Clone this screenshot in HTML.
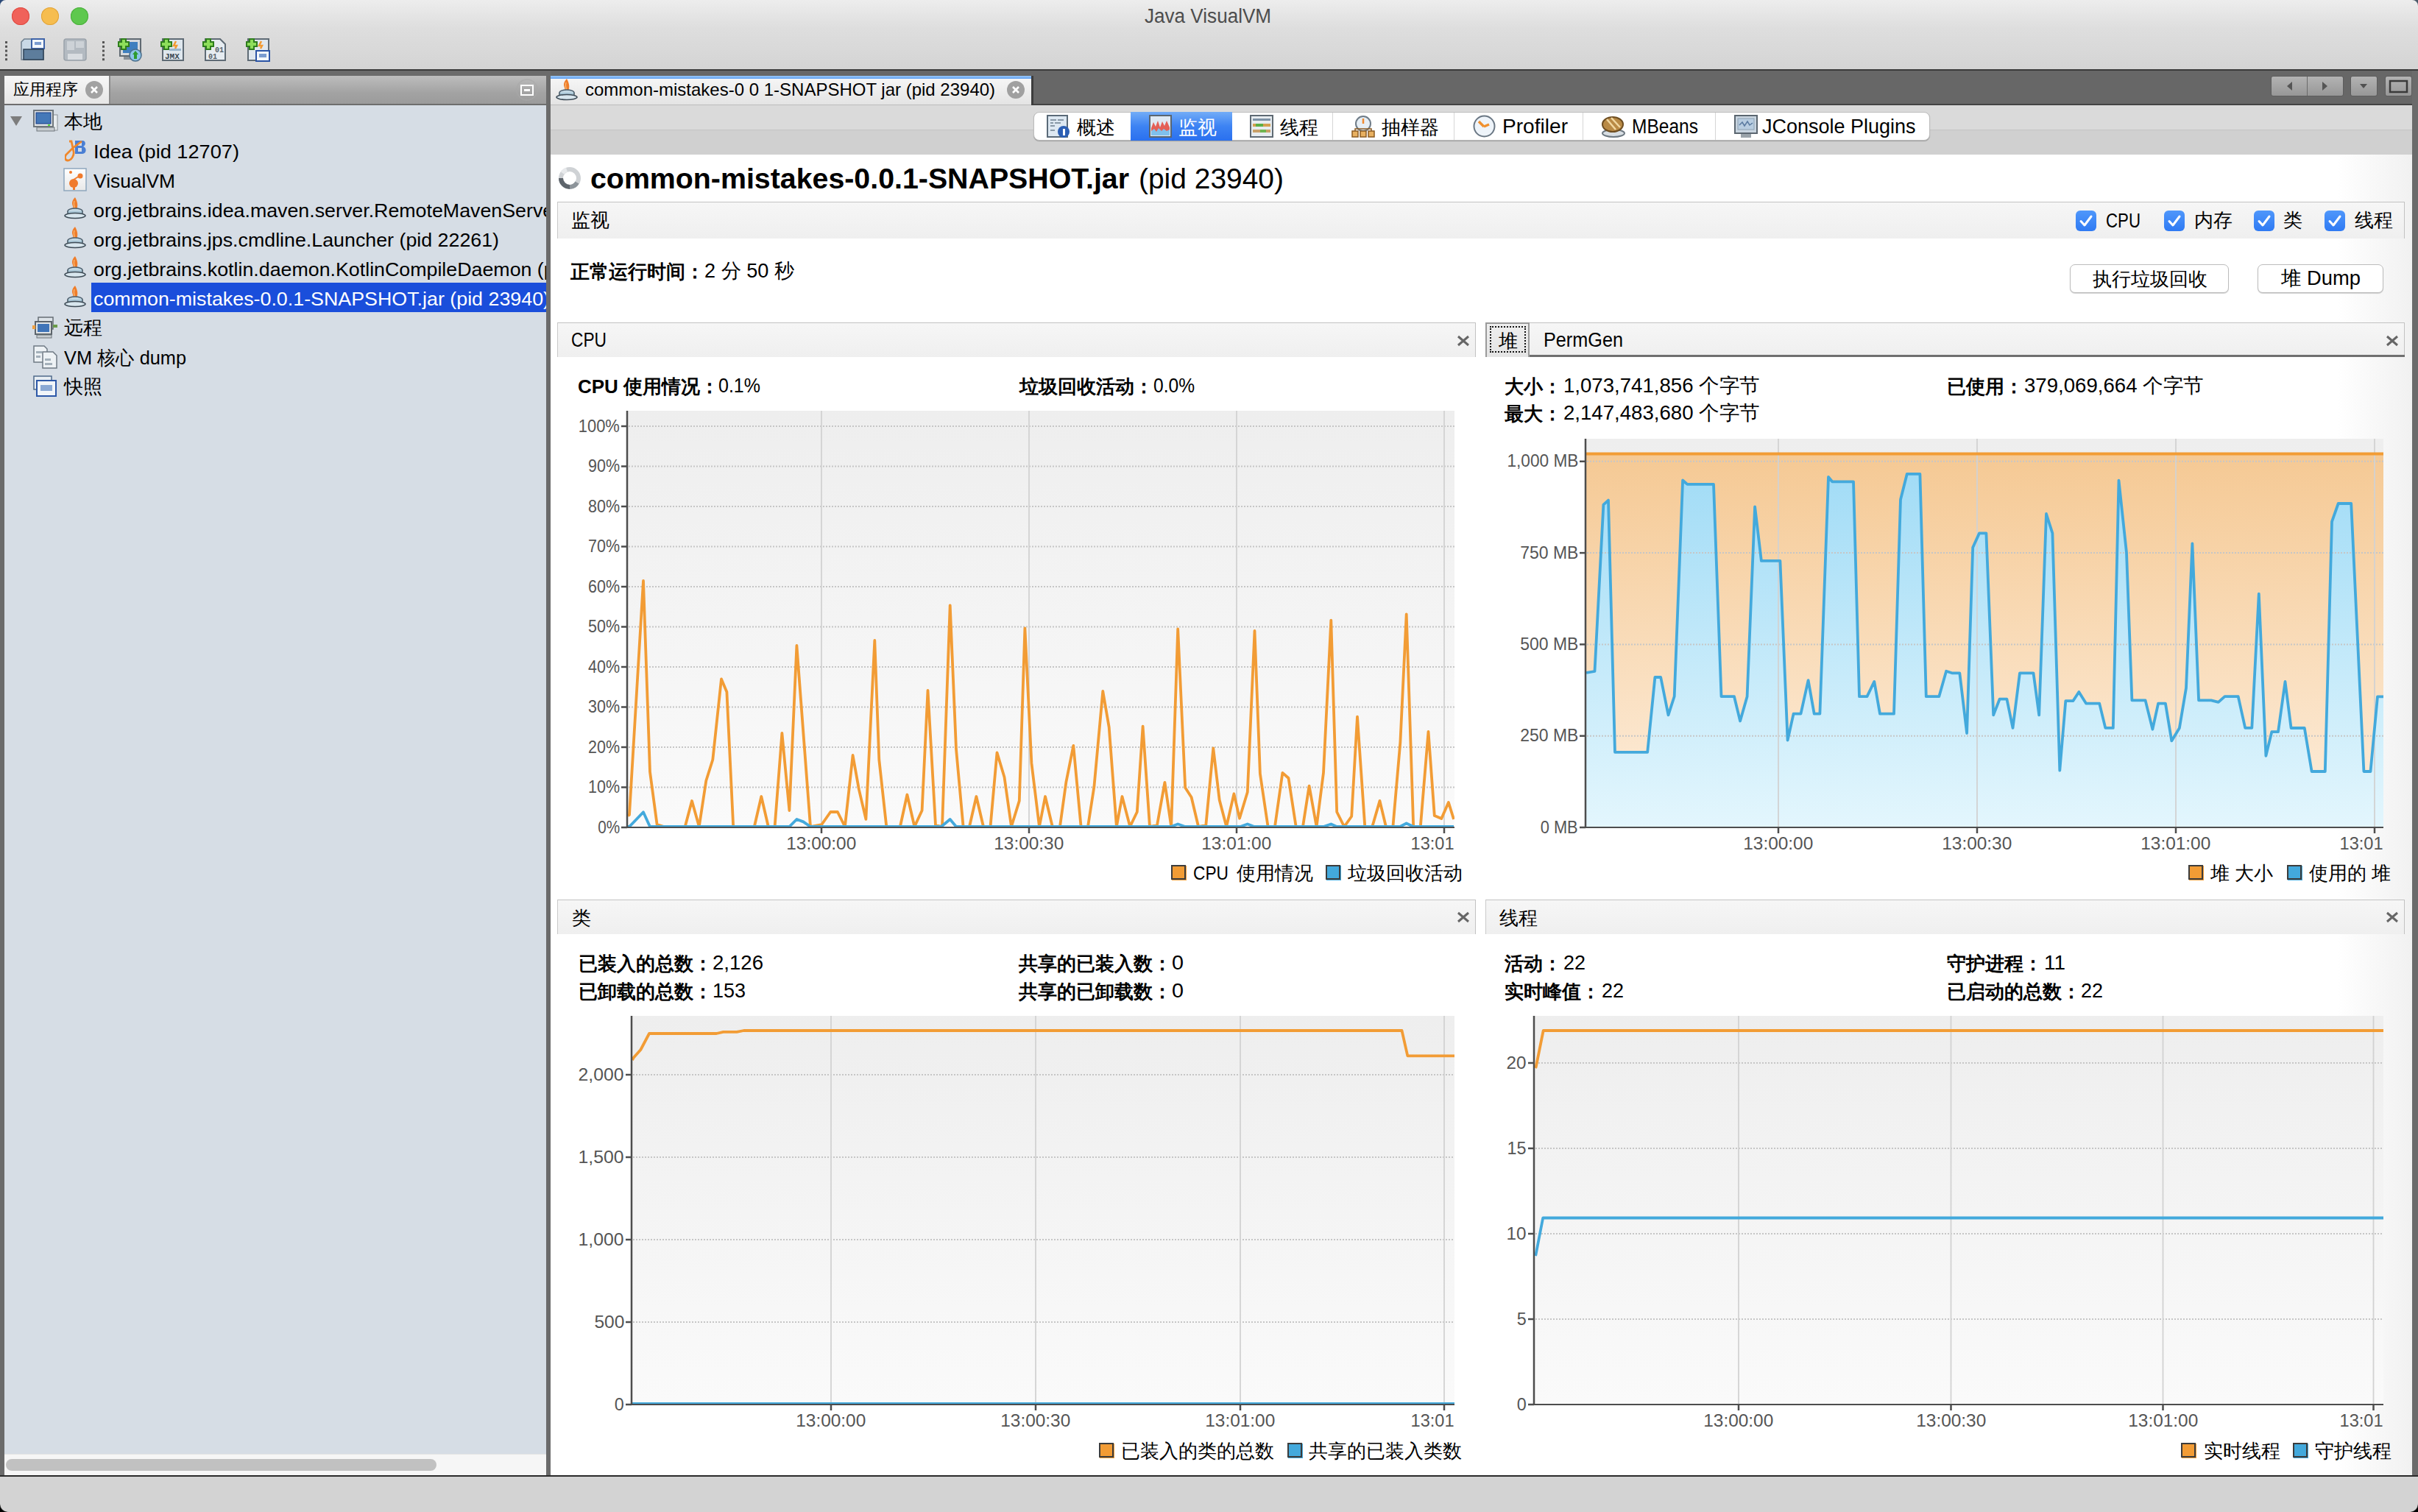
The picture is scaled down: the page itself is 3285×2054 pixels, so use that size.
<!DOCTYPE html>
<html><head><meta charset="utf-8"><title>Java VisualVM</title>
<style>
html,body{margin:0;padding:0;}
body{width:3285px;height:2054px;position:relative;overflow:hidden;background:#6b6b6b;font-family:"Liberation Sans", sans-serif;}
svg{position:absolute;left:0;top:0;}
</style></head><body>
<div style="position:absolute;left:0px;top:0px;width:3285px;height:94px;background:linear-gradient(#ededed,#dedede 40%,#d4d4d4);"></div><div style="position:absolute;left:0px;top:94px;width:3285px;height:2px;background:#3a3a3a;"></div><div style="position:absolute;left:16px;top:10px;width:24px;height:24px;border-radius:50%;background:#f0625a;box-shadow:inset 0 0 0 1px #de4a42;"></div><div style="position:absolute;left:56px;top:10px;width:24px;height:24px;border-radius:50%;background:#f6bd4f;box-shadow:inset 0 0 0 1px #e0a33a;"></div><div style="position:absolute;left:96px;top:10px;width:24px;height:24px;border-radius:50%;background:#5ec84e;box-shadow:inset 0 0 0 1px #4aae3c;"></div><div style="position:absolute;left:1141.0px;width:1000px;text-align:center;top:9.1px;font-size:27px;line-height:27px;font-weight:normal;color:#4d4d4d;white-space:nowrap;"><span id="t0" style="display:inline-block;transform:scaleX(0.9658);transform-origin:center center;">Java VisualVM</span></div><div style="position:absolute;left:0px;top:2004px;width:3285px;height:2px;background:#2a2a2a;"></div><div style="position:absolute;left:0px;top:2006px;width:3285px;height:48px;background:#d3d3d3;border-radius:0 0 12px 12px;"></div><svg style="left:7px;top:56px;" width="3" height="27" viewBox="0 0 3 27"><rect x="0" y="0.0" width="3" height="3" fill="#555"/><rect x="0" y="5.8" width="3" height="3" fill="#555"/><rect x="0" y="11.6" width="3" height="3" fill="#555"/><rect x="0" y="17.4" width="3" height="3" fill="#555"/><rect x="0" y="23.2" width="3" height="3" fill="#555"/></svg><svg style="left:139px;top:56px;" width="3" height="27" viewBox="0 0 3 27"><rect x="0" y="0.0" width="3" height="3" fill="#555"/><rect x="0" y="5.8" width="3" height="3" fill="#555"/><rect x="0" y="11.6" width="3" height="3" fill="#555"/><rect x="0" y="17.4" width="3" height="3" fill="#555"/><rect x="0" y="23.2" width="3" height="3" fill="#555"/></svg><svg style="left:28px;top:52px;" width="33" height="31" viewBox="0 0 33 31"><path d="M1 5 l4 -4 h10 l4 4 v6 h12 v18 h-30 z" fill="#c9d9e6" stroke="#6d7f8e" stroke-width="1.5"/><rect x="15" y="1" width="17" height="13" fill="#f4f8fc" stroke="#3e63a8" stroke-width="2"/><rect x="19" y="5" width="9" height="4" fill="#7a9cd0"/><path d="M4 15 h27 v14 h-27 z" fill="#5d7d9c" stroke="#2e4156" stroke-width="1.5"/></svg><svg style="left:86px;top:52px;" width="32" height="31" viewBox="0 0 32 31"><rect x="1" y="1" width="30" height="29" rx="3" fill="#b3bac1" stroke="#9aa2aa" stroke-width="1.5"/><rect x="5" y="4" width="10" height="12" fill="#cdd2d7"/><rect x="17" y="4" width="11" height="9" fill="#cdd2d7"/><rect x="6" y="21" width="20" height="8" fill="#d9dde1"/></svg><svg style="left:160px;top:52px;" width="33" height="32" viewBox="0 0 33 32"><rect x="3" y="1" width="28" height="23" fill="#d5d9dd" stroke="#606a72" stroke-width="2"/><rect x="7" y="5" width="20" height="15" fill="#3f7fbf"/><rect x="8" y="25" width="18" height="4" fill="#8a9299"/><circle cx="24" cy="23" r="8" fill="#8cc4e8" stroke="#4b6e8c" stroke-width="1.5"/><path d="M20 22 l4 -5 l4 5 h-2 v6 h-4 v-6 z" fill="#2e9b2e"/><path d="M4 0 h8 v4 h4 v8 h-4 v4 h-8 v-4 h-4 v-8 h4 z" fill="#2f7d1e"/><path d="M6 2 h4 v4 h4 v4 h-4 v4 h-4 v-4 h-4 v-4 h4 z" fill="#8ede5a"/></svg><svg style="left:218px;top:52px;" width="33" height="32" viewBox="0 0 33 32"><rect x="3" y="1" width="28" height="29" fill="#dfe7ee" stroke="#5f6b75" stroke-width="2"/><path d="M21 4 l-3 6 h4 l-2 4" stroke="#f29a32" stroke-width="2.5" fill="none"/><rect x="12" y="14" width="16" height="3" fill="#9bb6cc"/><text x="6" y="28" font-family="Liberation Mono" font-weight="bold" font-size="11" fill="#3a4752">JMX</text><path d="M4 0 h8 v4 h4 v8 h-4 v4 h-8 v-4 h-4 v-8 h4 z" fill="#2f7d1e"/><path d="M6 2 h4 v4 h4 v4 h-4 v4 h-4 v-4 h-4 v-4 h4 z" fill="#8ede5a"/></svg><svg style="left:275px;top:52px;" width="32" height="32" viewBox="0 0 32 32"><path d="M4 1 h20 l7 7 v22 h-27 z" fill="#e6ecf1" stroke="#5f6b75" stroke-width="2"/><text x="8" y="28" font-family="Liberation Mono" font-weight="bold" font-size="10" fill="#56626c">01</text><text x="17" y="19" font-family="Liberation Mono" font-weight="bold" font-size="10" fill="#56626c">01</text><path d="M4 0 h8 v4 h4 v8 h-4 v4 h-8 v-4 h-4 v-8 h4 z" fill="#2f7d1e"/><path d="M6 2 h4 v4 h4 v4 h-4 v4 h-4 v-4 h-4 v-4 h4 z" fill="#8ede5a"/></svg><svg style="left:334px;top:52px;" width="33" height="32" viewBox="0 0 33 32"><rect x="3" y="1" width="28" height="29" fill="#dfe7ee" stroke="#5f6b75" stroke-width="2"/><path d="M21 4 l-3 6 h4 l-2 4" stroke="#f29a32" stroke-width="2.5" fill="none"/><rect x="14" y="17" width="18" height="14" fill="#f3f7fb" stroke="#2c55a6" stroke-width="2"/><rect x="18" y="21" width="10" height="5" fill="#7a9cd0"/><path d="M4 0 h8 v4 h4 v8 h-4 v4 h-8 v-4 h-4 v-8 h4 z" fill="#2f7d1e"/><path d="M6 2 h4 v4 h4 v4 h-4 v4 h-4 v-4 h-4 v-4 h4 z" fill="#8ede5a"/></svg><div style="position:absolute;left:6px;top:103px;width:736px;height:38px;background:linear-gradient(#bdbdbd,#a3a3a3 60%,#9b9b9b);"></div><div style="position:absolute;left:6px;top:103px;width:144px;height:38px;background:linear-gradient(#f7f7f7,#e6e6e6);border-right:2px solid #8c8c8c;box-sizing:border-box;"></div><span id="t1" style="position:absolute;left:18.0px;top:111.4px;font-size:22px;line-height:22px;font-weight:normal;color:#000;white-space:nowrap;">应用程序</span><div style="position:absolute;left:116px;top:110px;width:24px;height:24px;border-radius:50%;background:#a2a2a2;"></div><svg style="left:116px;top:110px;" width="24" height="24" viewBox="0 0 24 24"><path d="M8 8 L16 16 M16 8 L8 16" stroke="#fff" stroke-width="2.6"/></svg><svg style="left:700px;top:106px;" width="32" height="32" viewBox="0 0 32 32"><circle cx="16" cy="16" r="14" fill="none" stroke="#a8a8a8" stroke-width="1.5" opacity="0.6"/><rect x="8" y="10" width="16" height="13" fill="none" stroke="#fff" stroke-width="2"/><rect x="12" y="15" width="8" height="3" fill="#fff"/></svg><div style="position:absolute;left:6px;top:141px;width:736px;height:2px;background:#6e6e6e;"></div><div style="position:absolute;left:6px;top:143px;width:736px;height:1832px;background:#d6dde5;"></div><div style="position:absolute;left:6px;top:1975px;width:736px;height:29px;background:#f6f6f6;border-top:1px solid #e4e4e4;box-sizing:border-box;"></div><div style="position:absolute;left:8px;top:1982px;width:585px;height:16px;background:#c1c1c1;border-radius:8px;"></div><svg style="left:13px;top:157px;" width="18" height="15" viewBox="0 0 18 15"><path d="M1 1 H17 L9 14 Z" fill="#7d7d7d"/></svg><svg style="left:45px;top:149px;" width="34" height="31" viewBox="0 0 34 31"><rect x="27" y="7" width="6" height="21" fill="#e9edf0" stroke="#8a9096" stroke-width="1"/><rect x="1" y="1" width="26" height="22" fill="#e1e4e6" stroke="#6f767c" stroke-width="2"/><rect x="4" y="4" width="20" height="15" fill="#4478b8" stroke="#163a85" stroke-width="1"/><rect x="20" y="20" width="3" height="2" fill="#5bdc3a"/><rect x="5" y="24" width="24" height="5" fill="#c7ccd0" stroke="#6f767c" stroke-width="1"/></svg><span id="t2" style="position:absolute;left:87.0px;top:152.0px;font-size:26px;line-height:26px;font-weight:normal;color:#000;white-space:nowrap;">本地</span><svg style="left:88px;top:190px;" width="30" height="30" viewBox="0 0 30 30"><path d="M14 1 h10 c5 0 5 7 1 8 c5 1 5 10 -1 10 h-10 z M18 4 v4 h5 v-4 z M18 11 v5 h5 v-5 z" fill="#4a7fd4" fill-rule="evenodd"/><path d="M6 2 l3 0 l3 14 c1 5 -3 12 -8 12 c-4 0 -5 -6 -1 -9 l8 -8 l12 -9" stroke="#f0872a" stroke-width="2.8" fill="none"/></svg><span id="t3" style="position:absolute;left:127.0px;top:193.0px;font-size:26px;line-height:26px;font-weight:normal;color:#000;white-space:nowrap;transform:scaleX(1.0455);transform-origin:left center;">Idea (pid 12707)</span><svg style="left:86px;top:228px;" width="32" height="32" viewBox="0 0 32 32"><rect x="1" y="1" width="30" height="30" fill="url(#vvg)" stroke="#8fa7bd" stroke-width="1.5"/><defs><linearGradient id="vvg" x1="0" y1="0" x2="0" y2="1"><stop offset="0" stop-color="#fff"/><stop offset="1" stop-color="#e8e8e8"/></linearGradient></defs><circle cx="14" cy="21" r="6" fill="#f07a2c"/><circle cx="23" cy="11" r="3.5" fill="#f07a2c"/><circle cx="10" cy="6" r="2" fill="#f07a2c"/><path d="M14 16 L22 11" stroke="#f07a2c" stroke-width="2"/><rect x="13" y="26" width="3" height="4" fill="#f07a2c"/></svg><span id="t4" style="position:absolute;left:127.0px;top:233.0px;font-size:26px;line-height:26px;font-weight:normal;color:#000;white-space:nowrap;transform:scaleX(1.0150);transform-origin:left center;">VisualVM</span><svg style="left:87px;top:267px;" width="30" height="31" viewBox="0 0 30 31"><path d="M15 1 C11 5 10 9 12 13 L13 18 L17 18 C19 13 19 8 15 1 Z" fill="#ef7d2a"/><path d="M14 6 C13 9 13 12 15 17" stroke="#f7b36c" stroke-width="1.5" fill="none"/><ellipse cx="15" cy="20" rx="10" ry="4" fill="#c2d8e4" stroke="#4b5d6b" stroke-width="1.5"/><path d="M5 20 v3 c0 3 20 3 20 0 v-3" fill="#a9c6d6" stroke="#4b5d6b" stroke-width="1.5"/><ellipse cx="15" cy="26" rx="14" ry="3.5" fill="#d8e6ee" stroke="#3d4a55" stroke-width="1.5"/></svg><span id="t5" style="position:absolute;left:127.0px;top:273.0px;font-size:26px;line-height:26px;font-weight:normal;color:#000;white-space:nowrap;transform:scaleX(1.0300);transform-origin:left center;">org.jetbrains.idea.maven.server.RemoteMavenServer3</span><svg style="left:87px;top:307px;" width="30" height="31" viewBox="0 0 30 31"><path d="M15 1 C11 5 10 9 12 13 L13 18 L17 18 C19 13 19 8 15 1 Z" fill="#ef7d2a"/><path d="M14 6 C13 9 13 12 15 17" stroke="#f7b36c" stroke-width="1.5" fill="none"/><ellipse cx="15" cy="20" rx="10" ry="4" fill="#c2d8e4" stroke="#4b5d6b" stroke-width="1.5"/><path d="M5 20 v3 c0 3 20 3 20 0 v-3" fill="#a9c6d6" stroke="#4b5d6b" stroke-width="1.5"/><ellipse cx="15" cy="26" rx="14" ry="3.5" fill="#d8e6ee" stroke="#3d4a55" stroke-width="1.5"/></svg><span id="t6" style="position:absolute;left:127.0px;top:313.0px;font-size:26px;line-height:26px;font-weight:normal;color:#000;white-space:nowrap;transform:scaleX(1.0304);transform-origin:left center;">org.jetbrains.jps.cmdline.Launcher (pid 22261)</span><svg style="left:87px;top:347px;" width="30" height="31" viewBox="0 0 30 31"><path d="M15 1 C11 5 10 9 12 13 L13 18 L17 18 C19 13 19 8 15 1 Z" fill="#ef7d2a"/><path d="M14 6 C13 9 13 12 15 17" stroke="#f7b36c" stroke-width="1.5" fill="none"/><ellipse cx="15" cy="20" rx="10" ry="4" fill="#c2d8e4" stroke="#4b5d6b" stroke-width="1.5"/><path d="M5 20 v3 c0 3 20 3 20 0 v-3" fill="#a9c6d6" stroke="#4b5d6b" stroke-width="1.5"/><ellipse cx="15" cy="26" rx="14" ry="3.5" fill="#d8e6ee" stroke="#3d4a55" stroke-width="1.5"/></svg><span id="t7" style="position:absolute;left:127.0px;top:353.0px;font-size:26px;line-height:26px;font-weight:normal;color:#000;white-space:nowrap;transform:scaleX(1.0300);transform-origin:left center;">org.jetbrains.kotlin.daemon.KotlinCompileDaemon (pid</span><svg style="left:87px;top:387px;" width="30" height="31" viewBox="0 0 30 31"><path d="M15 1 C11 5 10 9 12 13 L13 18 L17 18 C19 13 19 8 15 1 Z" fill="#ef7d2a"/><path d="M14 6 C13 9 13 12 15 17" stroke="#f7b36c" stroke-width="1.5" fill="none"/><ellipse cx="15" cy="20" rx="10" ry="4" fill="#c2d8e4" stroke="#4b5d6b" stroke-width="1.5"/><path d="M5 20 v3 c0 3 20 3 20 0 v-3" fill="#a9c6d6" stroke="#4b5d6b" stroke-width="1.5"/><ellipse cx="15" cy="26" rx="14" ry="3.5" fill="#d8e6ee" stroke="#3d4a55" stroke-width="1.5"/></svg><div style="position:absolute;left:124px;top:384px;width:618px;height:40px;background:#1a4edb;"></div><span id="t8" style="position:absolute;left:127.0px;top:393.0px;font-size:26px;line-height:26px;font-weight:normal;color:#fff;white-space:nowrap;transform:scaleX(1.0314);transform-origin:left center;">common-mistakes-0.0.1-SNAPSHOT.jar (pid 23940)</span><svg style="left:44px;top:429px;" width="36" height="32" viewBox="0 0 36 32"><rect x="8" y="2" width="20" height="16" fill="#dde3e8" stroke="#656d74" stroke-width="1.5"/><rect x="4" y="8" width="22" height="17" fill="#e1e4e6" stroke="#5c646b" stroke-width="2"/><rect x="7" y="11" width="16" height="11" fill="#3f74b8"/><rect x="0" y="13" width="4" height="5" fill="#f0a040"/><rect x="28" y="12" width="6" height="4" fill="#6a9a4a"/><rect x="6" y="26" width="20" height="4" fill="#c7ccd0" stroke="#6f767c" stroke-width="1"/></svg><span id="t9" style="position:absolute;left:87.0px;top:432.0px;font-size:26px;line-height:26px;font-weight:normal;color:#000;white-space:nowrap;">远程</span><svg style="left:44px;top:469px;" width="36" height="32" viewBox="0 0 36 32"><path d="M2 1 h14 l4 4 v18 h-18 z" fill="#eef2f5" stroke="#6f7a84" stroke-width="1.5"/><path d="M14 9 h14 l5 5 v17 h-19 z" fill="#eef2f5" stroke="#6f7a84" stroke-width="1.5"/><rect x="5" y="8" width="8" height="3" fill="#a4b0ba"/><rect x="5" y="14" width="6" height="3" fill="#a4b0ba"/><rect x="17" y="18" width="8" height="3" fill="#a4b0ba"/><rect x="17" y="24" width="10" height="3" fill="#a4b0ba"/></svg><span id="t10" style="position:absolute;left:87.0px;top:473.0px;font-size:26px;line-height:26px;font-weight:normal;color:#000;white-space:nowrap;transform:scaleX(0.9736);transform-origin:left center;">VM 核心 dump</span><svg style="left:44px;top:509px;" width="36" height="32" viewBox="0 0 36 32"><rect x="2" y="2" width="24" height="18" fill="#e8eef3" stroke="#4f6a8a" stroke-width="1.5"/><rect x="6" y="8" width="26" height="21" fill="#f1f5f9" stroke="#2d58a8" stroke-width="2"/><rect x="11" y="14" width="16" height="8" fill="#8aa8d4"/></svg><span id="t11" style="position:absolute;left:87.0px;top:512.0px;font-size:26px;line-height:26px;font-weight:normal;color:#000;white-space:nowrap;">快照</span><div style="position:absolute;left:748px;top:96px;width:2529px;height:47px;background:#676767;"></div><div style="position:absolute;left:1404px;top:141px;width:1873px;height:2px;background:#444;"></div><div style="position:absolute;left:748px;top:103px;width:653px;height:4px;background:linear-gradient(#9ccaf9,#5f9fef);"></div><div style="position:absolute;left:748px;top:107px;width:653px;height:36px;background:linear-gradient(#f5f5f5,#e4e4e4);border-bottom:1px solid #bdbdbd;box-sizing:border-box;"></div><div style="position:absolute;left:1401px;top:103px;width:3px;height:40px;background:#3d3d3d;"></div><svg style="left:755px;top:106px;" width="30" height="31" viewBox="0 0 30 31"><path d="M15 1 C11 5 10 9 12 13 L13 18 L17 18 C19 13 19 8 15 1 Z" fill="#ef7d2a"/><path d="M14 6 C13 9 13 12 15 17" stroke="#f7b36c" stroke-width="1.5" fill="none"/><ellipse cx="15" cy="20" rx="10" ry="4" fill="#c2d8e4" stroke="#4b5d6b" stroke-width="1.5"/><path d="M5 20 v3 c0 3 20 3 20 0 v-3" fill="#a9c6d6" stroke="#4b5d6b" stroke-width="1.5"/><ellipse cx="15" cy="26" rx="14" ry="3.5" fill="#d8e6ee" stroke="#3d4a55" stroke-width="1.5"/></svg><span id="t12" style="position:absolute;left:795.0px;top:109.7px;font-size:24px;line-height:24px;font-weight:normal;color:#000;white-space:nowrap;">common-mistakes-0 0 1-SNAPSHOT jar (pid 23940)</span><div style="position:absolute;left:1368px;top:110px;width:24px;height:24px;border-radius:50%;background:#a0a0a0;"></div><svg style="left:1368px;top:110px;" width="24" height="24" viewBox="0 0 24 24"><path d="M8 8 L16 16 M16 8 L8 16" stroke="#fff" stroke-width="2.6"/></svg><div style="position:absolute;left:3085px;top:103px;width:99px;height:28px;background:linear-gradient(#b3b3b3,#979797);border:1px solid #5c5c5c;box-sizing:border-box;border-radius:3px;"></div><div style="position:absolute;left:3134px;top:104px;width:1px;height:26px;background:#6a6a6a;"></div><div style="position:absolute;left:3193px;top:103px;width:37px;height:28px;background:linear-gradient(#b3b3b3,#979797);border:1px solid #5c5c5c;box-sizing:border-box;border-radius:3px;"></div><div style="position:absolute;left:3240px;top:103px;width:37px;height:28px;background:linear-gradient(#b3b3b3,#979797);border:1px solid #5c5c5c;box-sizing:border-box;border-radius:3px;"></div><svg style="left:3085px;top:103px;" width="192" height="28" viewBox="0 0 192 28"><path d="M29 8 L22 14 L29 20 Z" fill="#555"/><path d="M70 8 L77 14 L70 20 Z" fill="#555"/><path d="M121 11 H131 L126 17 Z" fill="#505050"/><rect x="162" y="7" width="23" height="15" fill="none" stroke="#3a3a3a" stroke-width="2.5"/></svg><div style="position:absolute;left:748px;top:143px;width:2529px;height:33px;background:#dadada;"></div><div style="position:absolute;left:748px;top:176px;width:2529px;height:1px;background:#c4c4c4;"></div><div style="position:absolute;left:748px;top:177px;width:2529px;height:33px;background:#d0d0d0;"></div><div style="position:absolute;left:1404px;top:152px;width:1218px;height:39px;box-sizing:border-box;background:#fff;border:1px solid #bdbdbd;border-radius:8px;box-shadow:0 1px 1px rgba(0,0,0,0.25);"></div><div style="position:absolute;left:1536px;top:152px;width:138px;height:39px;background:linear-gradient(#72acf7,#3d83f3 50%,#2a70ef);"></div><div style="position:absolute;left:1810px;top:153px;width:1px;height:37px;background:#d6d6d6;"></div><div style="position:absolute;left:1975px;top:153px;width:1px;height:37px;background:#d6d6d6;"></div><div style="position:absolute;left:2150px;top:153px;width:1px;height:37px;background:#d6d6d6;"></div><div style="position:absolute;left:2330px;top:153px;width:1px;height:37px;background:#d6d6d6;"></div><svg style="left:1422px;top:156px;" width="33" height="32" viewBox="0 0 33 32"><rect x="1" y="1" width="27" height="29" fill="#dde8f2" stroke="#5a6a78" stroke-width="2"/><rect x="5" y="6" width="8" height="2" fill="#8898a6"/><rect x="15" y="6" width="8" height="2" fill="#8898a6"/><rect x="5" y="10" width="4" height="2" fill="#8898a6"/><rect x="11" y="10" width="8" height="2" fill="#8898a6"/><rect x="5" y="14" width="6" height="2" fill="#8898a6"/><rect x="5" y="20" width="6" height="2" fill="#8898a6"/><circle cx="23" cy="23" r="8" fill="#2c5fb4"/><rect x="22" y="19" width="3" height="9" fill="#fff"/></svg><span id="t13" style="position:absolute;left:1463.0px;top:160.0px;font-size:26px;line-height:26px;font-weight:normal;color:#000;white-space:nowrap;">概述</span><svg style="left:1561px;top:156px;" width="31" height="31" viewBox="0 0 31 31"><rect x="1" y="1" width="29" height="29" fill="#dfe9f3" stroke="#5b6670" stroke-width="2"/><path d="M3 18 L6 10 L9 16 L12 8 L15 17 L18 9 L21 15 L24 8 L28 17 V28 H3 Z" fill="#e5473a" opacity="0.85"/><path d="M3 28 V22 L7 19 L10 23 L13 18 L17 22 L20 19 L24 22 L28 20 V28 Z" fill="#7fc0ec"/></svg><span id="t14" style="position:absolute;left:1601.0px;top:160.0px;font-size:26px;line-height:26px;font-weight:normal;color:#fff;white-space:nowrap;">监视</span><svg style="left:1698px;top:156px;" width="32" height="31" viewBox="0 0 32 31"><rect x="1" y="1" width="30" height="29" fill="#e7ecf0" stroke="#5f6a73" stroke-width="2"/><rect x="4" y="5" width="24" height="3" fill="#7e92a6"/><rect x="4" y="12" width="24" height="4" fill="#d4a050"/><rect x="8" y="12" width="10" height="4" fill="#5cae45"/><rect x="4" y="20" width="24" height="4" fill="#c9a068"/><rect x="14" y="20" width="8" height="4" fill="#6fb551"/></svg><span id="t15" style="position:absolute;left:1739.0px;top:160.0px;font-size:26px;line-height:26px;font-weight:normal;color:#000;white-space:nowrap;">线程</span><svg style="left:1836px;top:156px;" width="32" height="32" viewBox="0 0 32 32"><circle cx="16" cy="12" r="10" fill="#e6eef5" stroke="#6f7c88" stroke-width="2"/><path d="M16 5 V12" stroke="#f08a30" stroke-width="2.5"/><rect x="1" y="22" width="8" height="8" fill="#e8b060" stroke="#8a5a20" stroke-width="1.5"/><rect x="12" y="22" width="8" height="8" fill="#e8b060" stroke="#8a5a20" stroke-width="1.5"/><rect x="23" y="22" width="8" height="8" fill="#e8b060" stroke="#8a5a20" stroke-width="1.5"/><path d="M5 22 V19 H27 V22" stroke="#8a5a20" stroke-width="1.5" fill="none"/></svg><span id="t16" style="position:absolute;left:1877.0px;top:160.0px;font-size:26px;line-height:26px;font-weight:normal;color:#000;white-space:nowrap;">抽样器</span><svg style="left:2001px;top:156px;" width="31" height="31" viewBox="0 0 31 31"><circle cx="15.5" cy="15.5" r="14" fill="#eef4fa" stroke="#6a7784" stroke-width="2"/><path d="M15 16 L8 9 M15 16 L22 13" stroke="#f0902e" stroke-width="3.5"/></svg><span id="t17" style="position:absolute;left:2041.0px;top:159.1px;font-size:27px;line-height:27px;font-weight:normal;color:#000;white-space:nowrap;transform:scaleX(1.0406);transform-origin:left center;">Profiler</span><svg style="left:2175px;top:156px;" width="34" height="32" viewBox="0 0 34 32"><ellipse cx="17" cy="25" rx="15" ry="5" fill="#d8dee3" stroke="#6c7780" stroke-width="2"/><ellipse cx="16" cy="13" rx="14" ry="10" fill="#b98a45" stroke="#6e4e22" stroke-width="2"/><path d="M8 6 L20 20 M14 4 L26 17" stroke="#f1d7a0" stroke-width="2.5"/></svg><span id="t18" style="position:absolute;left:2217.0px;top:159.1px;font-size:27px;line-height:27px;font-weight:normal;color:#000;white-space:nowrap;transform:scaleX(0.9085);transform-origin:left center;">MBeans</span><svg style="left:2356px;top:156px;" width="32" height="32" viewBox="0 0 32 32"><rect x="1" y="1" width="30" height="24" fill="#c9d5e0" stroke="#5b6670" stroke-width="2"/><rect x="5" y="5" width="22" height="15" fill="#b8cde0" stroke="#8ea2b4" stroke-width="1"/><path d="M7 14 L11 10 L14 15 L18 9 L21 14 L25 11" stroke="#5a7aa0" stroke-width="1.5" fill="none"/><rect x="9" y="26" width="14" height="5" fill="#9aa3aa"/></svg><span id="t19" style="position:absolute;left:2394.0px;top:159.1px;font-size:27px;line-height:27px;font-weight:normal;color:#000;white-space:nowrap;">JConsole Plugins</span><div style="position:absolute;left:748px;top:210px;width:2529px;height:1794px;background:linear-gradient(90deg,#fff 0,#fff 96%,#f1f1f1 100%);"></div><div style="position:absolute;left:742px;top:96px;width:6px;height:1908px;background:#6b6b6b;"></div><div style="position:absolute;left:3277px;top:96px;width:8px;height:1908px;background:#6b6b6b;"></div><div style="position:absolute;left:0px;top:96px;width:6px;height:1908px;background:#6b6b6b;"></div><svg style="left:758px;top:226px;" width="32" height="32" viewBox="0 0 32 32"><circle cx="16" cy="16" r="12" fill="none" stroke="#cfd2d5" stroke-width="6"/><path d="M4 16 A12 12 0 0 0 16 28" fill="none" stroke="#5d646b" stroke-width="6"/><path d="M16 28 A12 12 0 0 0 26 22" fill="none" stroke="#8d949a" stroke-width="6"/><path d="M6 9 A12 12 0 0 1 12 4.6" fill="none" stroke="#e8eaec" stroke-width="6"/></svg><span id="t20" style="position:absolute;left:802.0px;top:223.8px;font-size:38px;line-height:38px;font-weight:bold;color:#000;white-space:nowrap;transform:scaleX(1.0347);transform-origin:left center;">common-mistakes-0.0.1-SNAPSHOT.jar</span><span id="t21" style="position:absolute;left:1547.0px;top:223.8px;font-size:38px;line-height:38px;font-weight:normal;color:#000;white-space:nowrap;transform:scaleX(1.0247);transform-origin:left center;">(pid 23940)</span><div style="position:absolute;left:757px;top:274px;width:2510px;height:50px;background:linear-gradient(#f6f6f6,#efefef);border-top:1.5px solid #c2c2c2;border-left:1.5px solid #cacaca;border-right:1.5px solid #c2c2c2;box-sizing:border-box;"></div><span id="t22" style="position:absolute;left:776.0px;top:286.0px;font-size:26px;line-height:26px;font-weight:normal;color:#000;white-space:nowrap;">监视</span><div style="position:absolute;left:2820px;top:286px;width:28px;height:28px;border-radius:6px;background:linear-gradient(#4f97fb,#2f7af3);"></div><svg style="left:2820px;top:286px;" width="28" height="28" viewBox="0 0 28 28"><path d="M7 14.5 L12 20 L21 8" stroke="#fff" stroke-width="3" fill="none" stroke-linecap="round" stroke-linejoin="round"/></svg><span id="t23" style="position:absolute;left:2861.0px;top:287.1px;font-size:27px;line-height:27px;font-weight:normal;color:#000;white-space:nowrap;transform:scaleX(0.8243);transform-origin:left center;">CPU</span><div style="position:absolute;left:2940px;top:286px;width:28px;height:28px;border-radius:6px;background:linear-gradient(#4f97fb,#2f7af3);"></div><svg style="left:2940px;top:286px;" width="28" height="28" viewBox="0 0 28 28"><path d="M7 14.5 L12 20 L21 8" stroke="#fff" stroke-width="3" fill="none" stroke-linecap="round" stroke-linejoin="round"/></svg><span id="t24" style="position:absolute;left:2981.0px;top:286.0px;font-size:26px;line-height:26px;font-weight:normal;color:#000;white-space:nowrap;">内存</span><div style="position:absolute;left:3062px;top:286px;width:28px;height:28px;border-radius:6px;background:linear-gradient(#4f97fb,#2f7af3);"></div><svg style="left:3062px;top:286px;" width="28" height="28" viewBox="0 0 28 28"><path d="M7 14.5 L12 20 L21 8" stroke="#fff" stroke-width="3" fill="none" stroke-linecap="round" stroke-linejoin="round"/></svg><span id="t25" style="position:absolute;left:3102.0px;top:286.0px;font-size:26px;line-height:26px;font-weight:normal;color:#000;white-space:nowrap;">类</span><div style="position:absolute;left:3158px;top:286px;width:28px;height:28px;border-radius:6px;background:linear-gradient(#4f97fb,#2f7af3);"></div><svg style="left:3158px;top:286px;" width="28" height="28" viewBox="0 0 28 28"><path d="M7 14.5 L12 20 L21 8" stroke="#fff" stroke-width="3" fill="none" stroke-linecap="round" stroke-linejoin="round"/></svg><span id="t26" style="position:absolute;left:3199.0px;top:286.0px;font-size:26px;line-height:26px;font-weight:normal;color:#000;white-space:nowrap;">线程</span><span id="t27" style="position:absolute;left:775.0px;top:356.0px;font-size:26px;line-height:26px;font-weight:bold;color:#000;white-space:nowrap;">正常运行时间：</span><span id="t28" style="position:absolute;left:957.0px;top:355.1px;font-size:27px;line-height:27px;font-weight:normal;color:#000;white-space:nowrap;transform:scaleX(1.0036);transform-origin:left center;">2 分 50 秒</span><div style="position:absolute;left:2812px;top:359px;width:216px;height:39px;box-sizing:border-box;background:#fff;border:1px solid #bcbcbc;border-radius:7px;box-shadow:0 1px 1px rgba(0,0,0,0.18);"></div><span id="t29" style="position:absolute;left:2843.0px;top:366.0px;font-size:26px;line-height:26px;font-weight:normal;color:#000;white-space:nowrap;">执行垃圾回收</span><div style="position:absolute;left:3067px;top:359px;width:171px;height:39px;box-sizing:border-box;background:#fff;border:1px solid #bcbcbc;border-radius:7px;box-shadow:0 1px 1px rgba(0,0,0,0.18);"></div><span id="t30" style="position:absolute;left:3099.0px;top:365.1px;font-size:27px;line-height:27px;font-weight:normal;color:#000;white-space:nowrap;transform:scaleX(1.0138);transform-origin:left center;">堆 Dump</span><div style="position:absolute;left:757px;top:438px;width:1248px;height:47px;background:linear-gradient(#f6f6f6,#efefef);border-top:1.5px solid #c2c2c2;border-left:1.5px solid #cacaca;border-right:1.5px solid #c2c2c2;box-sizing:border-box;"></div><span id="t31" style="position:absolute;left:776.0px;top:449.1px;font-size:27px;line-height:27px;font-weight:normal;color:#000;white-space:nowrap;transform:scaleX(0.8419);transform-origin:left center;">CPU</span><svg style="left:1979px;top:455px;" width="18" height="16" viewBox="0 0 18 16"><path d="M2 2 L16 14 M16 2 L2 14" stroke="#666" stroke-width="3"/></svg><div style="position:absolute;left:2018px;top:438px;width:1249px;height:47px;background:linear-gradient(#f6f6f6,#efefef);border-top:1.5px solid #c2c2c2;border-left:1.5px solid #cacaca;border-right:1.5px solid #c2c2c2;box-sizing:border-box;"></div><div style="position:absolute;left:2078px;top:482px;width:1189px;height:3px;background:#6f6f6f;"></div><div style="position:absolute;left:2018px;top:438px;width:60px;height:47px;background:linear-gradient(#eeeeee,#e4e4e4);border:2px solid #9a9a9a;border-bottom:none;box-sizing:border-box;"></div><div style="position:absolute;left:2024px;top:443px;width:49px;height:36px;border:2px dotted #111;box-sizing:border-box;"></div><span id="t32" style="position:absolute;left:2036.0px;top:450.0px;font-size:26px;line-height:26px;font-weight:normal;color:#000;white-space:nowrap;">堆</span><span id="t33" style="position:absolute;left:2097.0px;top:449.1px;font-size:27px;line-height:27px;font-weight:normal;color:#000;white-space:nowrap;transform:scaleX(0.9347);transform-origin:left center;">PermGen</span><svg style="left:3241px;top:455px;" width="18" height="16" viewBox="0 0 18 16"><path d="M2 2 L16 14 M16 2 L2 14" stroke="#666" stroke-width="3"/></svg><div style="position:absolute;left:757px;top:1222px;width:1248px;height:47px;background:linear-gradient(#f6f6f6,#efefef);border-top:1.5px solid #c2c2c2;border-left:1.5px solid #cacaca;border-right:1.5px solid #c2c2c2;box-sizing:border-box;"></div><span id="t34" style="position:absolute;left:777.0px;top:1234.0px;font-size:26px;line-height:26px;font-weight:normal;color:#000;white-space:nowrap;">类</span><svg style="left:1979px;top:1238px;" width="18" height="16" viewBox="0 0 18 16"><path d="M2 2 L16 14 M16 2 L2 14" stroke="#666" stroke-width="3"/></svg><div style="position:absolute;left:2018px;top:1222px;width:1249px;height:47px;background:linear-gradient(#f6f6f6,#efefef);border-top:1.5px solid #c2c2c2;border-left:1.5px solid #cacaca;border-right:1.5px solid #c2c2c2;box-sizing:border-box;"></div><span id="t35" style="position:absolute;left:2037.0px;top:1234.0px;font-size:26px;line-height:26px;font-weight:normal;color:#000;white-space:nowrap;">线程</span><svg style="left:3241px;top:1238px;" width="18" height="16" viewBox="0 0 18 16"><path d="M2 2 L16 14 M16 2 L2 14" stroke="#666" stroke-width="3"/></svg><span id="t36" style="position:absolute;left:785.0px;top:512.0px;font-size:26px;line-height:26px;font-weight:bold;color:#000;white-space:nowrap;">CPU 使用情况：</span><span id="t37" style="position:absolute;left:976.0px;top:511.1px;font-size:27px;line-height:27px;font-weight:normal;color:#000;white-space:nowrap;transform:scaleX(0.9261);transform-origin:left center;">0.1%</span><span id="t38" style="position:absolute;left:1385.0px;top:512.0px;font-size:26px;line-height:26px;font-weight:bold;color:#000;white-space:nowrap;">垃圾回收活动：</span><span id="t39" style="position:absolute;left:1567.0px;top:511.1px;font-size:27px;line-height:27px;font-weight:normal;color:#000;white-space:nowrap;transform:scaleX(0.9099);transform-origin:left center;">0.0%</span><span id="t40" style="position:absolute;left:2044.0px;top:512.0px;font-size:26px;line-height:26px;font-weight:bold;color:#000;white-space:nowrap;">大小：</span><span id="t41" style="position:absolute;left:2124.0px;top:511.1px;font-size:27px;line-height:27px;font-weight:normal;color:#000;white-space:nowrap;transform:scaleX(1.0223);transform-origin:left center;">1,073,741,856 个字节</span><span id="t42" style="position:absolute;left:2044.0px;top:549.0px;font-size:26px;line-height:26px;font-weight:bold;color:#000;white-space:nowrap;">最大：</span><span id="t43" style="position:absolute;left:2124.0px;top:548.1px;font-size:27px;line-height:27px;font-weight:normal;color:#000;white-space:nowrap;transform:scaleX(1.0223);transform-origin:left center;">2,147,483,680 个字节</span><span id="t44" style="position:absolute;left:2645.0px;top:512.0px;font-size:26px;line-height:26px;font-weight:bold;color:#000;white-space:nowrap;">已使用：</span><span id="t45" style="position:absolute;left:2750.0px;top:511.1px;font-size:27px;line-height:27px;font-weight:normal;color:#000;white-space:nowrap;transform:scaleX(1.0224);transform-origin:left center;">379,069,664 个字节</span><span id="t46" style="position:absolute;left:786.0px;top:1296.0px;font-size:26px;line-height:26px;font-weight:bold;color:#000;white-space:nowrap;">已装入的总数：</span><span id="t47" style="position:absolute;left:968.0px;top:1295.1px;font-size:27px;line-height:27px;font-weight:normal;color:#000;white-space:nowrap;transform:scaleX(1.0210);transform-origin:left center;">2,126</span><span id="t48" style="position:absolute;left:786.0px;top:1334.0px;font-size:26px;line-height:26px;font-weight:bold;color:#000;white-space:nowrap;">已卸载的总数：</span><span id="t49" style="position:absolute;left:968.0px;top:1333.1px;font-size:27px;line-height:27px;font-weight:normal;color:#000;white-space:nowrap;">153</span><span id="t50" style="position:absolute;left:1384.0px;top:1296.0px;font-size:26px;line-height:26px;font-weight:bold;color:#000;white-space:nowrap;">共享的已装入数：</span><span id="t51" style="position:absolute;left:1592.0px;top:1295.1px;font-size:27px;line-height:27px;font-weight:normal;color:#000;white-space:nowrap;transform:scaleX(1.0644);transform-origin:left center;">0</span><span id="t52" style="position:absolute;left:1384.0px;top:1334.0px;font-size:26px;line-height:26px;font-weight:bold;color:#000;white-space:nowrap;">共享的已卸载数：</span><span id="t53" style="position:absolute;left:1592.0px;top:1333.1px;font-size:27px;line-height:27px;font-weight:normal;color:#000;white-space:nowrap;transform:scaleX(1.0644);transform-origin:left center;">0</span><span id="t54" style="position:absolute;left:2044.0px;top:1296.0px;font-size:26px;line-height:26px;font-weight:bold;color:#000;white-space:nowrap;">活动：</span><span id="t55" style="position:absolute;left:2124.0px;top:1295.1px;font-size:27px;line-height:27px;font-weight:normal;color:#000;white-space:nowrap;">22</span><span id="t56" style="position:absolute;left:2044.0px;top:1334.0px;font-size:26px;line-height:26px;font-weight:bold;color:#000;white-space:nowrap;">实时峰值：</span><span id="t57" style="position:absolute;left:2176.0px;top:1333.1px;font-size:27px;line-height:27px;font-weight:normal;color:#000;white-space:nowrap;">22</span><span id="t58" style="position:absolute;left:2645.0px;top:1296.0px;font-size:26px;line-height:26px;font-weight:bold;color:#000;white-space:nowrap;">守护进程：</span><span id="t59" style="position:absolute;left:2777.0px;top:1295.1px;font-size:27px;line-height:27px;font-weight:normal;color:#000;white-space:nowrap;transform:scaleX(1.0346);transform-origin:left center;">11</span><span id="t60" style="position:absolute;left:2645.0px;top:1334.0px;font-size:26px;line-height:26px;font-weight:bold;color:#000;white-space:nowrap;">已启动的总数：</span><span id="t61" style="position:absolute;left:2827.0px;top:1333.1px;font-size:27px;line-height:27px;font-weight:normal;color:#000;white-space:nowrap;">22</span><svg style="left:0;top:0" width="3285" height="2054"><defs><linearGradient id="bgc" x1="0" y1="0" x2="0" y2="1"><stop offset="0" stop-color="#eeeeee"/><stop offset="1" stop-color="#fafafa"/></linearGradient></defs><rect x="853" y="558" width="1123" height="566" fill="url(#bgc)"/><line x1="854" y1="1124.0" x2="1976" y2="1124.0" stroke="#c6c6c6" stroke-width="2" stroke-dasharray="2 2"/><line x1="854" y1="1069.5" x2="1976" y2="1069.5" stroke="#c6c6c6" stroke-width="2" stroke-dasharray="2 2"/><line x1="854" y1="1015.0" x2="1976" y2="1015.0" stroke="#c6c6c6" stroke-width="2" stroke-dasharray="2 2"/><line x1="854" y1="960.5" x2="1976" y2="960.5" stroke="#c6c6c6" stroke-width="2" stroke-dasharray="2 2"/><line x1="854" y1="906.0" x2="1976" y2="906.0" stroke="#c6c6c6" stroke-width="2" stroke-dasharray="2 2"/><line x1="854" y1="851.5" x2="1976" y2="851.5" stroke="#c6c6c6" stroke-width="2" stroke-dasharray="2 2"/><line x1="854" y1="797.0" x2="1976" y2="797.0" stroke="#c6c6c6" stroke-width="2" stroke-dasharray="2 2"/><line x1="854" y1="742.5" x2="1976" y2="742.5" stroke="#c6c6c6" stroke-width="2" stroke-dasharray="2 2"/><line x1="854" y1="688.0" x2="1976" y2="688.0" stroke="#c6c6c6" stroke-width="2" stroke-dasharray="2 2"/><line x1="854" y1="633.5" x2="1976" y2="633.5" stroke="#c6c6c6" stroke-width="2" stroke-dasharray="2 2"/><line x1="854" y1="579.0" x2="1976" y2="579.0" stroke="#c6c6c6" stroke-width="2" stroke-dasharray="2 2"/><line x1="1116" y1="558" x2="1116" y2="1124" stroke="#d2d2d2" stroke-width="1.8"/><line x1="1398" y1="558" x2="1398" y2="1124" stroke="#d2d2d2" stroke-width="1.8"/><line x1="1680" y1="558" x2="1680" y2="1124" stroke="#d2d2d2" stroke-width="1.8"/><line x1="1962" y1="558" x2="1962" y2="1124" stroke="#d2d2d2" stroke-width="1.8"/><defs><clipPath id="cpc"><rect x="853" y="558" width="1123" height="566"/></clipPath></defs><g clip-path="url(#cpc)"><polyline points="853.0,1108.0 855.0,1107.0 874.0,789.0 883.0,1048.6 892.6,1120.0 902.0,1123.0 930.7,1123.0 940.0,1088.0 949.8,1123.0 959.3,1060.5 968.3,1032.0 980.0,922.4 987.4,940.0 996.2,1123.0 1024.8,1123.0 1034.3,1082.0 1043.8,1123.0 1052.6,1123.0 1062.4,996.0 1072.4,1101.0 1082.4,877.0 1101.0,1123.0 1116.4,1120.0 1128.3,1103.0 1137.9,1103.0 1147.9,1123.0 1158.6,1026.0 1166.9,1072.4 1176.4,1112.9 1188.3,870.0 1194.3,1032.0 1204.3,1123.0 1222.9,1123.0 1232.4,1079.5 1242.4,1123.0 1252.6,1101.0 1260.5,937.9 1271.0,1121.0 1280.0,1123.0 1290.7,822.4 1299.0,1017.6 1308.6,1123.0 1317.0,1123.0 1326.4,1082.0 1336.0,1123.0 1345.5,1123.0 1354.5,1022.4 1364.5,1055.7 1374.0,1123.0 1384.8,1087.9 1392.4,853.3 1401.4,1036.7 1412.0,1123.0 1420.0,1082.0 1429.8,1123.0 1440.0,1123.0 1448.3,1062.9 1458.3,1012.9 1468.6,1123.0 1478.0,1123.0 1486.4,1068.8 1498.3,939.0 1506.7,987.9 1516.9,1123.0 1524.5,1082.0 1535.2,1123.0 1544.8,1103.0 1552.6,986.7 1562.0,1123.0 1572.0,1121.0 1582.4,1062.9 1591.2,1123.0 1600.2,854.5 1610.2,1070.0 1618.6,1083.0 1628.1,1123.0 1638.3,1121.0 1648.3,1016.4 1656.7,1086.7 1666.2,1123.0 1676.4,1078.3 1684.0,1111.7 1694.8,1076.0 1704.5,857.0 1711.9,1051.0 1722.6,1123.0 1732.0,1123.0 1742.4,1049.8 1750.5,1057.0 1760.7,1123.0 1770.0,1123.0 1778.6,1067.6 1788.6,1123.0 1798.0,1049.8 1808.3,842.6 1816.2,1103.0 1826.2,1123.0 1836.2,1109.0 1844.0,973.6 1854.3,1123.0 1864.3,1123.0 1874.5,1087.9 1882.9,1123.0 1892.4,1123.0 1902.4,1008.0 1910.7,834.3 1920.2,1123.0 1929.8,1123.0 1940.5,993.8 1948.8,1108.0 1958.3,1112.0 1967.9,1090.0 1975.0,1113.0" fill="none" stroke="#f29c35" stroke-width="3.8" stroke-linejoin="round"/><polyline points="853.0,1123.0 855.0,1123.0 874.0,1103.3 883.0,1123.0 1072.4,1123.0 1082.4,1113.0 1091.4,1116.4 1101.0,1123.0 1278.8,1123.0 1290.7,1113.0 1299.0,1123.0 1591.0,1123.0 1600.2,1119.5 1610.0,1123.0 1685.0,1123.0 1694.8,1119.5 1704.0,1123.0 1798.0,1123.0 1808.3,1119.5 1816.0,1123.0 1902.0,1123.0 1910.7,1118.5 1920.0,1123.0 1975.0,1123.0" fill="none" stroke="#43a9dc" stroke-width="3.8" stroke-linejoin="round"/></g><line x1="852" y1="558" x2="852" y2="1125" stroke="#4d4d4d" stroke-width="2.5"/><line x1="852" y1="1124" x2="1976" y2="1124" stroke="#4d4d4d" stroke-width="2"/><line x1="844" y1="1124.0" x2="852" y2="1124.0" stroke="#4d4d4d" stroke-width="2.5"/><line x1="844" y1="1069.5" x2="852" y2="1069.5" stroke="#4d4d4d" stroke-width="2.5"/><line x1="844" y1="1015.0" x2="852" y2="1015.0" stroke="#4d4d4d" stroke-width="2.5"/><line x1="844" y1="960.5" x2="852" y2="960.5" stroke="#4d4d4d" stroke-width="2.5"/><line x1="844" y1="906.0" x2="852" y2="906.0" stroke="#4d4d4d" stroke-width="2.5"/><line x1="844" y1="851.5" x2="852" y2="851.5" stroke="#4d4d4d" stroke-width="2.5"/><line x1="844" y1="797.0" x2="852" y2="797.0" stroke="#4d4d4d" stroke-width="2.5"/><line x1="844" y1="742.5" x2="852" y2="742.5" stroke="#4d4d4d" stroke-width="2.5"/><line x1="844" y1="688.0" x2="852" y2="688.0" stroke="#4d4d4d" stroke-width="2.5"/><line x1="844" y1="633.5" x2="852" y2="633.5" stroke="#4d4d4d" stroke-width="2.5"/><line x1="844" y1="579.0" x2="852" y2="579.0" stroke="#4d4d4d" stroke-width="2.5"/><line x1="1116" y1="1124" x2="1116" y2="1132" stroke="#4d4d4d" stroke-width="2.5"/><line x1="1398" y1="1124" x2="1398" y2="1132" stroke="#4d4d4d" stroke-width="2.5"/><line x1="1680" y1="1124" x2="1680" y2="1132" stroke="#4d4d4d" stroke-width="2.5"/><line x1="1962" y1="1124" x2="1962" y2="1132" stroke="#4d4d4d" stroke-width="2.5"/></svg><span id="t62" style="position:absolute;right:2443.0px;top:1112.5px;font-size:23px;line-height:23px;font-weight:normal;color:#555;white-space:nowrap;transform:scaleX(0.9023);transform-origin:right center;">0%</span><span id="t63" style="position:absolute;right:2443.0px;top:1058.0px;font-size:23px;line-height:23px;font-weight:normal;color:#555;white-space:nowrap;transform:scaleX(0.9338);transform-origin:right center;">10%</span><span id="t64" style="position:absolute;right:2443.0px;top:1003.5px;font-size:23px;line-height:23px;font-weight:normal;color:#555;white-space:nowrap;transform:scaleX(0.9338);transform-origin:right center;">20%</span><span id="t65" style="position:absolute;right:2443.0px;top:949.0px;font-size:23px;line-height:23px;font-weight:normal;color:#555;white-space:nowrap;transform:scaleX(0.9338);transform-origin:right center;">30%</span><span id="t66" style="position:absolute;right:2443.0px;top:894.5px;font-size:23px;line-height:23px;font-weight:normal;color:#555;white-space:nowrap;transform:scaleX(0.9338);transform-origin:right center;">40%</span><span id="t67" style="position:absolute;right:2443.0px;top:840.0px;font-size:23px;line-height:23px;font-weight:normal;color:#555;white-space:nowrap;transform:scaleX(0.9338);transform-origin:right center;">50%</span><span id="t68" style="position:absolute;right:2443.0px;top:785.5px;font-size:23px;line-height:23px;font-weight:normal;color:#555;white-space:nowrap;transform:scaleX(0.9338);transform-origin:right center;">60%</span><span id="t69" style="position:absolute;right:2443.0px;top:731.0px;font-size:23px;line-height:23px;font-weight:normal;color:#555;white-space:nowrap;transform:scaleX(0.9338);transform-origin:right center;">70%</span><span id="t70" style="position:absolute;right:2443.0px;top:676.5px;font-size:23px;line-height:23px;font-weight:normal;color:#555;white-space:nowrap;transform:scaleX(0.9338);transform-origin:right center;">80%</span><span id="t71" style="position:absolute;right:2443.0px;top:622.0px;font-size:23px;line-height:23px;font-weight:normal;color:#555;white-space:nowrap;transform:scaleX(0.9338);transform-origin:right center;">90%</span><span id="t72" style="position:absolute;right:2443.0px;top:567.5px;font-size:23px;line-height:23px;font-weight:normal;color:#555;white-space:nowrap;transform:scaleX(0.9519);transform-origin:right center;">100%</span><div style="position:absolute;left:616.0px;width:1000px;text-align:center;top:1134.5px;font-size:23px;line-height:23px;font-weight:normal;color:#555;white-space:nowrap;"><span id="t73" style="display:inline-block;transform:scaleX(1.0611);transform-origin:center center;">13:00:00</span></div><div style="position:absolute;left:898.0px;width:1000px;text-align:center;top:1134.5px;font-size:23px;line-height:23px;font-weight:normal;color:#555;white-space:nowrap;"><span id="t74" style="display:inline-block;transform:scaleX(1.0611);transform-origin:center center;">13:00:30</span></div><div style="position:absolute;left:1180.0px;width:1000px;text-align:center;top:1134.5px;font-size:23px;line-height:23px;font-weight:normal;color:#555;white-space:nowrap;"><span id="t75" style="display:inline-block;transform:scaleX(1.0611);transform-origin:center center;">13:01:00</span></div><span id="t76" style="position:absolute;right:1309.0px;top:1134.5px;font-size:23px;line-height:23px;font-weight:normal;color:#555;white-space:nowrap;transform:scaleX(1.0250);transform-origin:right center;">13:01</span><svg style="left:1591px;top:1175px;" width="21" height="21" viewBox="0 0 21 21"><rect x="1" y="1" width="20" height="20" fill="#f29c35"/><rect x="1" y="1" width="18" height="18" fill="none" stroke="#3c3c3c" stroke-width="2"/></svg><span id="t77" style="position:absolute;left:1621.0px;top:1173.0px;font-size:26px;line-height:26px;font-weight:normal;color:#000;white-space:nowrap;transform:scaleX(0.8742);transform-origin:left center;">CPU</span><span id="t78" style="position:absolute;left:1680.0px;top:1173.0px;font-size:26px;line-height:26px;font-weight:normal;color:#000;white-space:nowrap;">使用情况</span><svg style="left:1801px;top:1175px;" width="21" height="21" viewBox="0 0 21 21"><rect x="1" y="1" width="20" height="20" fill="#43a9dc"/><rect x="1" y="1" width="18" height="18" fill="none" stroke="#3c3c3c" stroke-width="2"/></svg><span id="t79" style="position:absolute;left:1831.0px;top:1173.0px;font-size:26px;line-height:26px;font-weight:normal;color:#000;white-space:nowrap;">垃圾回收活动</span><svg style="left:0;top:0" width="3285" height="2054"><defs><linearGradient id="bgh" x1="0" y1="0" x2="0" y2="1"><stop offset="0" stop-color="#eeeeee"/><stop offset="1" stop-color="#fafafa"/></linearGradient></defs><rect x="2155" y="596" width="1083" height="528" fill="url(#bgh)"/><defs><linearGradient id="hog" x1="0" y1="0" x2="0" y2="1"><stop offset="0" stop-color="#f5c994"/><stop offset="1" stop-color="#fdeedd"/></linearGradient><linearGradient id="hbg" x1="0" y1="0" x2="0" y2="1"><stop offset="0" stop-color="#a2dcf6"/><stop offset="1" stop-color="#e3f6fd"/></linearGradient><clipPath id="hpc"><rect x="2155" y="596" width="1083" height="528"/></clipPath></defs><rect x="2155" y="616.5" width="1083" height="507.5" fill="url(#hog)"/><polygon points="2155,1124 2155.0,914.0 2166.5,912.0 2178.4,685.7 2185.0,679.6 2194.0,1021.8 2238.2,1021.8 2248.4,920.0 2256.2,920.0 2266.5,971.4 2274.7,946.0 2286.1,652.5 2292.3,657.9 2328.0,657.8 2338.5,946.2 2356.0,946.2 2364.1,979.5 2373.6,946.2 2384.1,688.3 2392.9,761.9 2418.4,761.9 2428.6,1005.7 2436.6,969.7 2446.5,969.7 2456.6,924.1 2464.7,969.7 2472.4,969.7 2484.0,648.0 2489.2,654.3 2518.0,654.3 2526.0,946.2 2536.5,946.2 2546.3,925.9 2554.0,969.7 2573.0,969.7 2582.0,678.8 2590.8,643.8 2608.4,643.8 2616.8,946.2 2634.3,946.2 2644.1,911.8 2651.8,914.3 2662.3,914.3 2672.1,996.0 2680.2,743.7 2689.0,724.4 2698.4,724.4 2708.2,971.4 2716.6,949.7 2726.4,949.7 2734.5,988.9 2744.0,914.3 2762.5,914.3 2770.2,971.4 2780.0,698.0 2788.4,724.4 2798.3,1046.7 2806.3,952.1 2816.5,952.1 2824.3,939.9 2834.0,955.6 2852.2,955.6 2860.3,988.9 2870.8,988.9 2878.5,652.6 2889.0,750.7 2896.4,951.4 2914.6,951.4 2924.4,990.7 2932.1,955.6 2941.9,955.6 2950.3,1006.4 2960.9,988.9 2970.0,934.6 2978.4,738.4 2987.1,951.4 3004.0,951.4 3013.8,953.9 3022.5,946.2 3040.7,946.2 3050.2,988.9 3059.3,988.9 3068.8,806.7 3078.4,1026.8 3086.3,994.2 3095.0,994.2 3104.5,926.0 3112.6,989.0 3130.8,989.0 3140.6,1048.0 3158.8,1048.0 3168.0,708.7 3176.7,684.0 3194.2,684.0 3211.4,1048.0 3220.5,1048.0 3230.0,946.3 3238.0,946.3 3238,1124" fill="url(#hbg)"/><line x1="2156" y1="1124.0" x2="3238" y2="1124.0" stroke="#c6c6c6" stroke-width="2" stroke-dasharray="2 2"/><line x1="2156" y1="999.7" x2="3238" y2="999.7" stroke="#c6c6c6" stroke-width="2" stroke-dasharray="2 2"/><line x1="2156" y1="875.4" x2="3238" y2="875.4" stroke="#c6c6c6" stroke-width="2" stroke-dasharray="2 2"/><line x1="2156" y1="751.1" x2="3238" y2="751.1" stroke="#c6c6c6" stroke-width="2" stroke-dasharray="2 2"/><line x1="2156" y1="626.8" x2="3238" y2="626.8" stroke="#c6c6c6" stroke-width="2" stroke-dasharray="2 2"/><line x1="2416" y1="596" x2="2416" y2="1124" stroke="#d2d2d2" stroke-width="1.8"/><line x1="2686" y1="596" x2="2686" y2="1124" stroke="#d2d2d2" stroke-width="1.8"/><line x1="2956" y1="596" x2="2956" y2="1124" stroke="#d2d2d2" stroke-width="1.8"/><line x1="3226" y1="596" x2="3226" y2="1124" stroke="#d2d2d2" stroke-width="1.8"/><g clip-path="url(#hpc)"><line x1="2155" y1="616.5" x2="3238" y2="616.5" stroke="#f29c35" stroke-width="4"/><polyline points="2155.0,914.0 2166.5,912.0 2178.4,685.7 2185.0,679.6 2194.0,1021.8 2238.2,1021.8 2248.4,920.0 2256.2,920.0 2266.5,971.4 2274.7,946.0 2286.1,652.5 2292.3,657.9 2328.0,657.8 2338.5,946.2 2356.0,946.2 2364.1,979.5 2373.6,946.2 2384.1,688.3 2392.9,761.9 2418.4,761.9 2428.6,1005.7 2436.6,969.7 2446.5,969.7 2456.6,924.1 2464.7,969.7 2472.4,969.7 2484.0,648.0 2489.2,654.3 2518.0,654.3 2526.0,946.2 2536.5,946.2 2546.3,925.9 2554.0,969.7 2573.0,969.7 2582.0,678.8 2590.8,643.8 2608.4,643.8 2616.8,946.2 2634.3,946.2 2644.1,911.8 2651.8,914.3 2662.3,914.3 2672.1,996.0 2680.2,743.7 2689.0,724.4 2698.4,724.4 2708.2,971.4 2716.6,949.7 2726.4,949.7 2734.5,988.9 2744.0,914.3 2762.5,914.3 2770.2,971.4 2780.0,698.0 2788.4,724.4 2798.3,1046.7 2806.3,952.1 2816.5,952.1 2824.3,939.9 2834.0,955.6 2852.2,955.6 2860.3,988.9 2870.8,988.9 2878.5,652.6 2889.0,750.7 2896.4,951.4 2914.6,951.4 2924.4,990.7 2932.1,955.6 2941.9,955.6 2950.3,1006.4 2960.9,988.9 2970.0,934.6 2978.4,738.4 2987.1,951.4 3004.0,951.4 3013.8,953.9 3022.5,946.2 3040.7,946.2 3050.2,988.9 3059.3,988.9 3068.8,806.7 3078.4,1026.8 3086.3,994.2 3095.0,994.2 3104.5,926.0 3112.6,989.0 3130.8,989.0 3140.6,1048.0 3158.8,1048.0 3168.0,708.7 3176.7,684.0 3194.2,684.0 3211.4,1048.0 3220.5,1048.0 3230.0,946.3 3238.0,946.3" fill="none" stroke="#43a9dc" stroke-width="3.8" stroke-linejoin="round"/></g><line x1="2154" y1="596" x2="2154" y2="1125" stroke="#4d4d4d" stroke-width="2.5"/><line x1="2154" y1="1124" x2="3238" y2="1124" stroke="#4d4d4d" stroke-width="2"/><line x1="2146" y1="1124.0" x2="2154" y2="1124.0" stroke="#4d4d4d" stroke-width="2.5"/><line x1="2146" y1="999.7" x2="2154" y2="999.7" stroke="#4d4d4d" stroke-width="2.5"/><line x1="2146" y1="875.4" x2="2154" y2="875.4" stroke="#4d4d4d" stroke-width="2.5"/><line x1="2146" y1="751.1" x2="2154" y2="751.1" stroke="#4d4d4d" stroke-width="2.5"/><line x1="2146" y1="626.8" x2="2154" y2="626.8" stroke="#4d4d4d" stroke-width="2.5"/><line x1="2416" y1="1124" x2="2416" y2="1132" stroke="#4d4d4d" stroke-width="2.5"/><line x1="2686" y1="1124" x2="2686" y2="1132" stroke="#4d4d4d" stroke-width="2.5"/><line x1="2956" y1="1124" x2="2956" y2="1132" stroke="#4d4d4d" stroke-width="2.5"/><line x1="3226" y1="1124" x2="3226" y2="1132" stroke="#4d4d4d" stroke-width="2.5"/></svg><span id="t80" style="position:absolute;right:1141.0px;top:1112.5px;font-size:23px;line-height:23px;font-weight:normal;color:#555;white-space:nowrap;transform:scaleX(0.9499);transform-origin:right center;">0 MB</span><span id="t81" style="position:absolute;right:1141.0px;top:988.2px;font-size:23px;line-height:23px;font-weight:normal;color:#555;white-space:nowrap;transform:scaleX(0.9966);transform-origin:right center;">250 MB</span><span id="t82" style="position:absolute;right:1141.0px;top:863.9px;font-size:23px;line-height:23px;font-weight:normal;color:#555;white-space:nowrap;transform:scaleX(0.9966);transform-origin:right center;">500 MB</span><span id="t83" style="position:absolute;right:1141.0px;top:739.6px;font-size:23px;line-height:23px;font-weight:normal;color:#555;white-space:nowrap;transform:scaleX(0.9966);transform-origin:right center;">750 MB</span><span id="t84" style="position:absolute;right:1141.0px;top:615.3px;font-size:23px;line-height:23px;font-weight:normal;color:#555;white-space:nowrap;transform:scaleX(0.9852);transform-origin:right center;">1,000 MB</span><div style="position:absolute;left:1916.0px;width:1000px;text-align:center;top:1134.5px;font-size:23px;line-height:23px;font-weight:normal;color:#555;white-space:nowrap;"><span id="t85" style="display:inline-block;transform:scaleX(1.0611);transform-origin:center center;">13:00:00</span></div><div style="position:absolute;left:2186.0px;width:1000px;text-align:center;top:1134.5px;font-size:23px;line-height:23px;font-weight:normal;color:#555;white-space:nowrap;"><span id="t86" style="display:inline-block;transform:scaleX(1.0611);transform-origin:center center;">13:00:30</span></div><div style="position:absolute;left:2456.0px;width:1000px;text-align:center;top:1134.5px;font-size:23px;line-height:23px;font-weight:normal;color:#555;white-space:nowrap;"><span id="t87" style="display:inline-block;transform:scaleX(1.0611);transform-origin:center center;">13:01:00</span></div><span id="t88" style="position:absolute;right:47.0px;top:1134.5px;font-size:23px;line-height:23px;font-weight:normal;color:#555;white-space:nowrap;transform:scaleX(1.0250);transform-origin:right center;">13:01</span><svg style="left:2973px;top:1175px;" width="21" height="21" viewBox="0 0 21 21"><rect x="1" y="1" width="20" height="20" fill="#f29c35"/><rect x="1" y="1" width="18" height="18" fill="none" stroke="#3c3c3c" stroke-width="2"/></svg><span id="t89" style="position:absolute;left:3003.0px;top:1173.0px;font-size:26px;line-height:26px;font-weight:normal;color:#000;white-space:nowrap;">堆 大小</span><svg style="left:3107px;top:1175px;" width="21" height="21" viewBox="0 0 21 21"><rect x="1" y="1" width="20" height="20" fill="#43a9dc"/><rect x="1" y="1" width="18" height="18" fill="none" stroke="#3c3c3c" stroke-width="2"/></svg><span id="t90" style="position:absolute;left:3137.0px;top:1173.0px;font-size:26px;line-height:26px;font-weight:normal;color:#000;white-space:nowrap;">使用的 堆</span><svg style="left:0;top:0" width="3285" height="2054"><defs><linearGradient id="bgk" x1="0" y1="0" x2="0" y2="1"><stop offset="0" stop-color="#eeeeee"/><stop offset="1" stop-color="#fafafa"/></linearGradient></defs><rect x="859" y="1380" width="1117" height="528" fill="url(#bgk)"/><line x1="860" y1="1908" x2="1976" y2="1908" stroke="#c6c6c6" stroke-width="2" stroke-dasharray="2 2"/><line x1="860" y1="1796" x2="1976" y2="1796" stroke="#c6c6c6" stroke-width="2" stroke-dasharray="2 2"/><line x1="860" y1="1684" x2="1976" y2="1684" stroke="#c6c6c6" stroke-width="2" stroke-dasharray="2 2"/><line x1="860" y1="1572" x2="1976" y2="1572" stroke="#c6c6c6" stroke-width="2" stroke-dasharray="2 2"/><line x1="860" y1="1460" x2="1976" y2="1460" stroke="#c6c6c6" stroke-width="2" stroke-dasharray="2 2"/><line x1="1129" y1="1380" x2="1129" y2="1908" stroke="#d2d2d2" stroke-width="1.8"/><line x1="1407" y1="1380" x2="1407" y2="1908" stroke="#d2d2d2" stroke-width="1.8"/><line x1="1685" y1="1380" x2="1685" y2="1908" stroke="#d2d2d2" stroke-width="1.8"/><line x1="1962" y1="1380" x2="1962" y2="1908" stroke="#d2d2d2" stroke-width="1.8"/><polyline points="859.0,1440.0 860.6,1437.0 870.4,1426.0 882.0,1404.0 973.4,1404.0 982.6,1401.9 1001.0,1401.9 1010.4,1400.0 1904.5,1400.0 1912.3,1434.4 1976.0,1434.4" fill="none" stroke="#f29c35" stroke-width="3.8" stroke-linejoin="round"/><line x1="859" y1="1906.5" x2="1976" y2="1906.5" stroke="#43a9dc" stroke-width="3"/><line x1="858" y1="1380" x2="858" y2="1909" stroke="#4d4d4d" stroke-width="2.5"/><line x1="858" y1="1908" x2="1976" y2="1908" stroke="#4d4d4d" stroke-width="2"/><line x1="850" y1="1908" x2="858" y2="1908" stroke="#4d4d4d" stroke-width="2.5"/><line x1="850" y1="1796" x2="858" y2="1796" stroke="#4d4d4d" stroke-width="2.5"/><line x1="850" y1="1684" x2="858" y2="1684" stroke="#4d4d4d" stroke-width="2.5"/><line x1="850" y1="1572" x2="858" y2="1572" stroke="#4d4d4d" stroke-width="2.5"/><line x1="850" y1="1460" x2="858" y2="1460" stroke="#4d4d4d" stroke-width="2.5"/><line x1="1129" y1="1908" x2="1129" y2="1916" stroke="#4d4d4d" stroke-width="2.5"/><line x1="1407" y1="1908" x2="1407" y2="1916" stroke="#4d4d4d" stroke-width="2.5"/><line x1="1685" y1="1908" x2="1685" y2="1916" stroke="#4d4d4d" stroke-width="2.5"/><line x1="1962" y1="1908" x2="1962" y2="1916" stroke="#4d4d4d" stroke-width="2.5"/></svg><span id="t91" style="position:absolute;right:2437.0px;top:1896.5px;font-size:23px;line-height:23px;font-weight:normal;color:#555;white-space:nowrap;transform:scaleX(1.0159);transform-origin:right center;">0</span><span id="t92" style="position:absolute;right:2437.0px;top:1784.5px;font-size:23px;line-height:23px;font-weight:normal;color:#555;white-space:nowrap;transform:scaleX(1.0684);transform-origin:right center;">500</span><span id="t93" style="position:absolute;right:2437.0px;top:1672.5px;font-size:23px;line-height:23px;font-weight:normal;color:#555;white-space:nowrap;transform:scaleX(1.0771);transform-origin:right center;">1,000</span><span id="t94" style="position:absolute;right:2437.0px;top:1560.5px;font-size:23px;line-height:23px;font-weight:normal;color:#555;white-space:nowrap;transform:scaleX(1.0771);transform-origin:right center;">1,500</span><span id="t95" style="position:absolute;right:2437.0px;top:1448.5px;font-size:23px;line-height:23px;font-weight:normal;color:#555;white-space:nowrap;transform:scaleX(1.0771);transform-origin:right center;">2,000</span><div style="position:absolute;left:629.0px;width:1000px;text-align:center;top:1918.5px;font-size:23px;line-height:23px;font-weight:normal;color:#555;white-space:nowrap;"><span id="t96" style="display:inline-block;transform:scaleX(1.0611);transform-origin:center center;">13:00:00</span></div><div style="position:absolute;left:907.0px;width:1000px;text-align:center;top:1918.5px;font-size:23px;line-height:23px;font-weight:normal;color:#555;white-space:nowrap;"><span id="t97" style="display:inline-block;transform:scaleX(1.0611);transform-origin:center center;">13:00:30</span></div><div style="position:absolute;left:1185.0px;width:1000px;text-align:center;top:1918.5px;font-size:23px;line-height:23px;font-weight:normal;color:#555;white-space:nowrap;"><span id="t98" style="display:inline-block;transform:scaleX(1.0611);transform-origin:center center;">13:01:00</span></div><span id="t99" style="position:absolute;right:1309.0px;top:1918.5px;font-size:23px;line-height:23px;font-weight:normal;color:#555;white-space:nowrap;transform:scaleX(1.0250);transform-origin:right center;">13:01</span><svg style="left:1493px;top:1960px;" width="21" height="21" viewBox="0 0 21 21"><rect x="1" y="1" width="20" height="20" fill="#f29c35"/><rect x="1" y="1" width="18" height="18" fill="none" stroke="#3c3c3c" stroke-width="2"/></svg><span id="t100" style="position:absolute;left:1523.0px;top:1958.0px;font-size:26px;line-height:26px;font-weight:normal;color:#000;white-space:nowrap;">已装入的类的总数</span><svg style="left:1749px;top:1960px;" width="21" height="21" viewBox="0 0 21 21"><rect x="1" y="1" width="20" height="20" fill="#43a9dc"/><rect x="1" y="1" width="18" height="18" fill="none" stroke="#3c3c3c" stroke-width="2"/></svg><span id="t101" style="position:absolute;left:1778.0px;top:1958.0px;font-size:26px;line-height:26px;font-weight:normal;color:#000;white-space:nowrap;">共享的已装入类数</span><svg style="left:0;top:0" width="3285" height="2054"><defs><linearGradient id="bgt" x1="0" y1="0" x2="0" y2="1"><stop offset="0" stop-color="#eeeeee"/><stop offset="1" stop-color="#fafafa"/></linearGradient></defs><rect x="2085" y="1380" width="1153" height="528" fill="url(#bgt)"/><line x1="2086" y1="1908" x2="3238" y2="1908" stroke="#c6c6c6" stroke-width="2" stroke-dasharray="2 2"/><line x1="2086" y1="1792" x2="3238" y2="1792" stroke="#c6c6c6" stroke-width="2" stroke-dasharray="2 2"/><line x1="2086" y1="1676" x2="3238" y2="1676" stroke="#c6c6c6" stroke-width="2" stroke-dasharray="2 2"/><line x1="2086" y1="1560" x2="3238" y2="1560" stroke="#c6c6c6" stroke-width="2" stroke-dasharray="2 2"/><line x1="2086" y1="1444" x2="3238" y2="1444" stroke="#c6c6c6" stroke-width="2" stroke-dasharray="2 2"/><line x1="2362" y1="1380" x2="2362" y2="1908" stroke="#d2d2d2" stroke-width="1.8"/><line x1="2650.5" y1="1380" x2="2650.5" y2="1908" stroke="#d2d2d2" stroke-width="1.8"/><line x1="2938.5" y1="1380" x2="2938.5" y2="1908" stroke="#d2d2d2" stroke-width="1.8"/><line x1="3224.5" y1="1380" x2="3224.5" y2="1908" stroke="#d2d2d2" stroke-width="1.8"/><polyline points="2086.0,1451.0 2086.7,1449.5 2096.7,1400.0 3238.0,1400.0" fill="none" stroke="#f29c35" stroke-width="3.8" stroke-linejoin="round"/><polyline points="2086.0,1706.0 2086.5,1704.5 2096.2,1654.5 3238.0,1654.5" fill="none" stroke="#43a9dc" stroke-width="3.8" stroke-linejoin="round"/><line x1="2084" y1="1380" x2="2084" y2="1909" stroke="#4d4d4d" stroke-width="2.5"/><line x1="2084" y1="1908" x2="3238" y2="1908" stroke="#4d4d4d" stroke-width="2"/><line x1="2076" y1="1908" x2="2084" y2="1908" stroke="#4d4d4d" stroke-width="2.5"/><line x1="2076" y1="1792" x2="2084" y2="1792" stroke="#4d4d4d" stroke-width="2.5"/><line x1="2076" y1="1676" x2="2084" y2="1676" stroke="#4d4d4d" stroke-width="2.5"/><line x1="2076" y1="1560" x2="2084" y2="1560" stroke="#4d4d4d" stroke-width="2.5"/><line x1="2076" y1="1444" x2="2084" y2="1444" stroke="#4d4d4d" stroke-width="2.5"/><line x1="2362" y1="1908" x2="2362" y2="1916" stroke="#4d4d4d" stroke-width="2.5"/><line x1="2650.5" y1="1908" x2="2650.5" y2="1916" stroke="#4d4d4d" stroke-width="2.5"/><line x1="2938.5" y1="1908" x2="2938.5" y2="1916" stroke="#4d4d4d" stroke-width="2.5"/><line x1="3224.5" y1="1908" x2="3224.5" y2="1916" stroke="#4d4d4d" stroke-width="2.5"/></svg><span id="t102" style="position:absolute;right:1211.0px;top:1896.5px;font-size:23px;line-height:23px;font-weight:normal;color:#555;white-space:nowrap;transform:scaleX(1.0159);transform-origin:right center;">0</span><span id="t103" style="position:absolute;right:1211.0px;top:1780.5px;font-size:23px;line-height:23px;font-weight:normal;color:#555;white-space:nowrap;transform:scaleX(1.0159);transform-origin:right center;">5</span><span id="t104" style="position:absolute;right:1211.0px;top:1664.5px;font-size:23px;line-height:23px;font-weight:normal;color:#555;white-space:nowrap;transform:scaleX(1.0549);transform-origin:right center;">10</span><span id="t105" style="position:absolute;right:1211.0px;top:1548.5px;font-size:23px;line-height:23px;font-weight:normal;color:#555;white-space:nowrap;transform:scaleX(1.0159);transform-origin:right center;">15</span><span id="t106" style="position:absolute;right:1211.0px;top:1432.5px;font-size:23px;line-height:23px;font-weight:normal;color:#555;white-space:nowrap;transform:scaleX(1.0549);transform-origin:right center;">20</span><div style="position:absolute;left:1862.0px;width:1000px;text-align:center;top:1918.5px;font-size:23px;line-height:23px;font-weight:normal;color:#555;white-space:nowrap;"><span id="t107" style="display:inline-block;transform:scaleX(1.0611);transform-origin:center center;">13:00:00</span></div><div style="position:absolute;left:2150.5px;width:1000px;text-align:center;top:1918.5px;font-size:23px;line-height:23px;font-weight:normal;color:#555;white-space:nowrap;"><span id="t108" style="display:inline-block;transform:scaleX(1.0611);transform-origin:center center;">13:00:30</span></div><div style="position:absolute;left:2438.5px;width:1000px;text-align:center;top:1918.5px;font-size:23px;line-height:23px;font-weight:normal;color:#555;white-space:nowrap;"><span id="t109" style="display:inline-block;transform:scaleX(1.0611);transform-origin:center center;">13:01:00</span></div><span id="t110" style="position:absolute;right:47.0px;top:1918.5px;font-size:23px;line-height:23px;font-weight:normal;color:#555;white-space:nowrap;transform:scaleX(1.0250);transform-origin:right center;">13:01</span><svg style="left:2963px;top:1960px;" width="21" height="21" viewBox="0 0 21 21"><rect x="1" y="1" width="20" height="20" fill="#f29c35"/><rect x="1" y="1" width="18" height="18" fill="none" stroke="#3c3c3c" stroke-width="2"/></svg><span id="t111" style="position:absolute;left:2994.0px;top:1958.0px;font-size:26px;line-height:26px;font-weight:normal;color:#000;white-space:nowrap;">实时线程</span><svg style="left:3115px;top:1960px;" width="21" height="21" viewBox="0 0 21 21"><rect x="1" y="1" width="20" height="20" fill="#43a9dc"/><rect x="1" y="1" width="18" height="18" fill="none" stroke="#3c3c3c" stroke-width="2"/></svg><span id="t112" style="position:absolute;left:3145.0px;top:1958.0px;font-size:26px;line-height:26px;font-weight:normal;color:#000;white-space:nowrap;">守护线程</span><svg style="left:0px;top:0px;" width="8" height="8" viewBox="0 0 8 8"><path d="M0 0 H8 A8 8 0 0 0 0 8 Z" fill="#2c4a78"/></svg><svg style="left:3277px;top:0px;" width="8" height="8" viewBox="0 0 8 8"><path d="M8 0 H0 A8 8 0 0 1 8 8 Z" fill="#4a5a6a"/></svg><svg style="left:0px;top:2044px;" width="10" height="10" viewBox="0 0 10 10"><path d="M0 10 H10 A10 10 0 0 1 0 0 Z" fill="#000"/></svg><svg style="left:3275px;top:2044px;" width="10" height="10" viewBox="0 0 10 10"><path d="M10 10 H0 A10 10 0 0 0 10 0 Z" fill="#000"/></svg>
</body></html>
